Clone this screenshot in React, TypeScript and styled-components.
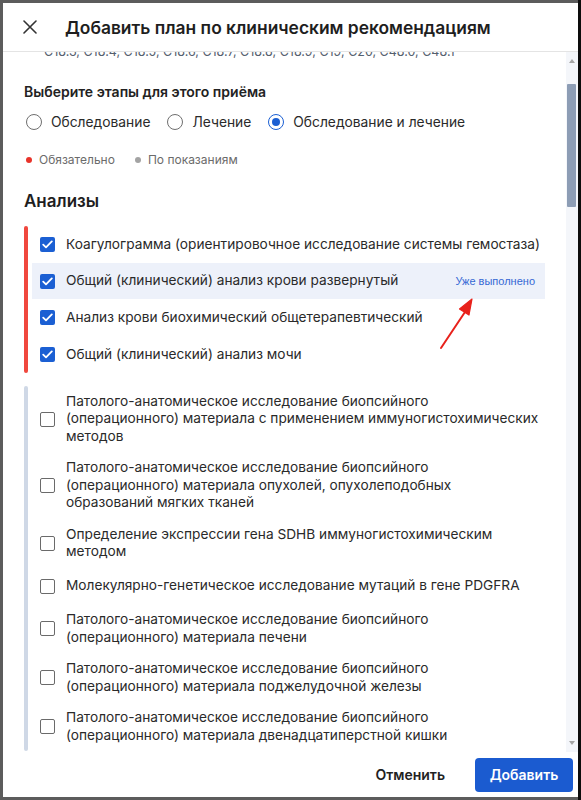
import React from 'react';
import styled, { createGlobalStyle } from 'styled-components';

const GlobalStyle = createGlobalStyle`
  html, body {
    margin: 0;
    padding: 0;
    background: #4d4d4d;
  }
  body {
    font-family: Inter, "Noto Sans", "Liberation Sans", sans-serif;
    color: #222;
  }
`;

const Backdrop = styled.div`
  width: 581px;
  height: 800px;
  box-sizing: border-box;
  padding: 3px 0 3px 3px;
  border-right: 3px solid #0d0d0d;
  background: #5c5c5c;
`;

const Dialog = styled.div`
  position: relative;
  width: 575px;
  height: 794px;
  background: #fff;
  display: flex;
  flex-direction: column;
  overflow: hidden;
`;

const Header = styled.div`
  height: 48px;
  flex-shrink: 0;
  display: flex;
  align-items: center;
  gap: 25px;
  padding-left: 17px;
  border-bottom: 1px solid #e4e4e4;
`;

const CloseButton = styled.button`
  width: 20px;
  height: 20px;
  padding: 0;
  border: none;
  background: none;
  display: flex;
  align-items: center;
  justify-content: center;
  color: #333;
`;

const Title = styled.h1`
  margin: 0;
  font-size: 17.4px;
  font-weight: 600;
  color: #1e1e1e;
`;

const Body = styled.div`
  position: relative;
  flex: 1;
  overflow: hidden;
`;

const Content = styled.div`
  margin-top: -9px;
  padding: 0 33px 0 21px;
`;

const Codes = styled.div`
  padding-left: 20px;
  font-size: 12.5px;
  line-height: 18px;
  color: #55606e;
`;

const StepTitle = styled.div`
  margin-top: 22px;
  font-size: 14px;
  font-weight: 600;
  color: #222;
`;

const RadioRow = styled.div`
  display: flex;
  align-items: center;
  gap: 17px;
  margin-top: 14px;
  padding-left: 2px;
`;

const RadioLabel = styled.label`
  display: flex;
  align-items: center;
  gap: 9px;
  font-size: 13.8px;
  color: #2a2a2a;
`;

const RadioCircle = styled.span<{ $checked?: boolean }>`
  width: 16px;
  height: 16px;
  box-sizing: border-box;
  border-radius: 50%;
  border: 1.5px solid ${(p) => (p.$checked ? '#1b5fd3' : '#6f6f6f')};
  display: flex;
  align-items: center;
  justify-content: center;
  &::after {
    content: '';
    width: 8px;
    height: 8px;
    border-radius: 50%;
    background: ${(p) => (p.$checked ? '#1b5fd3' : 'transparent')};
  }
`;

const Legend = styled.div`
  display: flex;
  align-items: center;
  gap: 20px;
  margin-top: 22px;
  padding-left: 2px;
`;

const LegendItem = styled.span<{ $color: string }>`
  display: flex;
  align-items: center;
  gap: 7px;
  font-size: 12px;
  color: #6b6b6b;
  &::before {
    content: '';
    width: 6px;
    height: 6px;
    border-radius: 50%;
    background: ${(p) => p.$color};
  }
`;

const SectionTitle = styled.h2`
  margin: 24px 0 15px;
  font-size: 17px;
  font-weight: 600;
  color: #1e1e1e;
`;

const Group = styled.div<{ $accent: string }>`
  display: flex;
  gap: 4px;
  margin-bottom: 13px;
  &::before {
    content: '';
    width: 4px;
    flex-shrink: 0;
    border-radius: 2px;
    background: ${(p) => p.$accent};
  }
`;

const Rows = styled.div`
  flex: 1;
  display: flex;
  flex-direction: column;
`;

const Row = styled.div<{ $highlight?: boolean }>`
  min-height: 36.7px;
  box-sizing: border-box;
  display: flex;
  align-items: center;
  gap: 11px;
  padding: 7px 4px 7px 8px;
  background: ${(p) => (p.$highlight ? '#edf1fa' : 'transparent')};
`;

const Box = styled.span<{ $checked?: boolean }>`
  width: 15px;
  height: 15px;
  flex-shrink: 0;
  box-sizing: border-box;
  border-radius: 2px;
  border: ${(p) => (p.$checked ? 'none' : '1.5px solid #6a6a6a')};
  background: ${(p) => (p.$checked ? '#1b5fd3' : '#fff')};
  display: flex;
  align-items: center;
  justify-content: center;
`;

const RowText = styled.span`
  flex: 1;
  font-size: 13.7px;
  line-height: 17.5px;
  color: #2a2a2a;
`;

const Done = styled.span`
  margin-right: 6px;
  font-family: "Liberation Sans", Arial, sans-serif;
  font-size: 11px;
  color: #3568d4;
  white-space: nowrap;
`;

const Scrollbar = styled.div`
  position: absolute;
  top: 0;
  right: 0;
  bottom: 0;
  width: 12px;
  background: #f4f6fa;
  display: flex;
  flex-direction: column;
  align-items: center;
  justify-content: space-between;
  padding: 7px 0;
  box-sizing: border-box;
`;

const Arrow = styled.span<{ $down?: boolean }>`
  width: 0;
  height: 0;
  border-left: 3.5px solid transparent;
  border-right: 3.5px solid transparent;
  ${(p) => (p.$down ? 'border-top: 4px solid #a5a5a5;' : 'border-bottom: 4px solid #a5a5a5;')}
`;

const Thumb = styled.div`
  position: absolute;
  top: 32px;
  left: 1px;
  width: 9px;
  height: 123px;
  border-radius: 1px;
  background: #8d9db5;
`;

const Footer = styled.div`
  height: 45px;
  flex-shrink: 0;
  display: flex;
  align-items: center;
  justify-content: flex-end;
  gap: 16px;
  padding-right: 5px;
  background: #fff;
`;

const Button = styled.button<{ $primary?: boolean }>`
  height: 34px;
  padding: 0 14px;
  border: none;
  border-radius: 4px;
  font-family: Inter, "Liberation Sans", sans-serif;
  font-size: 14px;
  font-weight: 600;
  color: ${(p) => (p.$primary ? '#fff' : '#222')};
  background: ${(p) => (p.$primary ? '#1b5bd0' : 'transparent')};
  min-width: ${(p) => (p.$primary ? '98px' : 'auto')};
`;

const Pointer = styled.svg`
  position: absolute;
  left: 0;
  top: 0;
  pointer-events: none;
`;

const Check = () => (
  <svg width="11" height="9" viewBox="0 0 11 9">
    <path d="M1.2 4.6 L4 7.3 L9.8 1.4" fill="none" stroke="#fff" strokeWidth="1.8" strokeLinecap="round" strokeLinejoin="round" />
  </svg>
);

const required = [
  'Коагулограмма (ориентировочное исследование системы гемостаза)',
  'Общий (клинический) анализ крови развернутый',
  'Анализ крови биохимический общетерапевтический',
  'Общий (клинический) анализ мочи',
];

const optional = [
  'Патолого-анатомическое исследование биопсийного (операционного) материала с применением иммуногистохимических методов',
  'Патолого-анатомическое исследование биопсийного (операционного) материала опухолей, опухолеподобных образований мягких тканей',
  'Определение экспрессии гена SDHB иммуногистохимическим методом',
  'Молекулярно-генетическое исследование мутаций в гене PDGFRA',
  'Патолого-анатомическое исследование биопсийного (операционного) материала печени',
  'Патолого-анатомическое исследование биопсийного (операционного) материала поджелудочной железы',
  'Патолого-анатомическое исследование биопсийного (операционного) материала двенадцатиперстной кишки',
];

export default function App() {
  return (
    <>
      <GlobalStyle />
      <Backdrop>
        <Dialog>
          <Header>
            <CloseButton aria-label="Закрыть">
              <svg width="14" height="14" viewBox="0 0 14 14">
                <path d="M1 1 L13 13 M13 1 L1 13" stroke="#333" strokeWidth="1.6" strokeLinecap="round" />
              </svg>
            </CloseButton>
            <Title>Добавить план по клиническим рекомендациям</Title>
          </Header>

          <Body>
            <Content>
              <Codes>C18.3, C18.4, C18.5, C18.6, C18.7, C18.8, C18.9, C19, C20, C48.0, C48.1</Codes>

              <StepTitle>Выберите этапы для этого приёма</StepTitle>
              <RadioRow>
                <RadioLabel><RadioCircle />Обследование</RadioLabel>
                <RadioLabel><RadioCircle />Лечение</RadioLabel>
                <RadioLabel><RadioCircle $checked />Обследование и лечение</RadioLabel>
              </RadioRow>

              <Legend>
                <LegendItem $color="#e8332a">Обязательно</LegendItem>
                <LegendItem $color="#a3a3a3">По показаниям</LegendItem>
              </Legend>

              <SectionTitle>Анализы</SectionTitle>

              <Group $accent="#f0483e">
                <Rows>
                  {required.map((t, i) => (
                    <Row key={t} $highlight={i === 1}>
                      <Box $checked><Check /></Box>
                      <RowText>{t}</RowText>
                      {i === 1 && <Done>Уже выполнено</Done>}
                    </Row>
                  ))}
                </Rows>
              </Group>

              <Group $accent="#cfd8e6">
                <Rows>
                  {optional.map((t) => (
                    <Row key={t}>
                      <Box />
                      <RowText>{t}</RowText>
                    </Row>
                  ))}
                </Rows>
              </Group>
            </Content>

            <Scrollbar>
              <Arrow />
              <Thumb />
              <Arrow $down />
            </Scrollbar>
          </Body>

          <Footer>
            <Button>Отменить</Button>
            <Button $primary>Добавить</Button>
          </Footer>

          <Pointer width="575" height="794" viewBox="0 0 575 794">
            <path d="M438 345 L462 309" stroke="#e8211b" strokeWidth="2" strokeLinecap="round" />
            <path d="M469 296 L456.5 306 L466 312 Z" fill="#e8211b" stroke="#e8211b" strokeWidth="1.2" strokeLinejoin="round" />
          </Pointer>
        </Dialog>
      </Backdrop>
    </>
  );
}
